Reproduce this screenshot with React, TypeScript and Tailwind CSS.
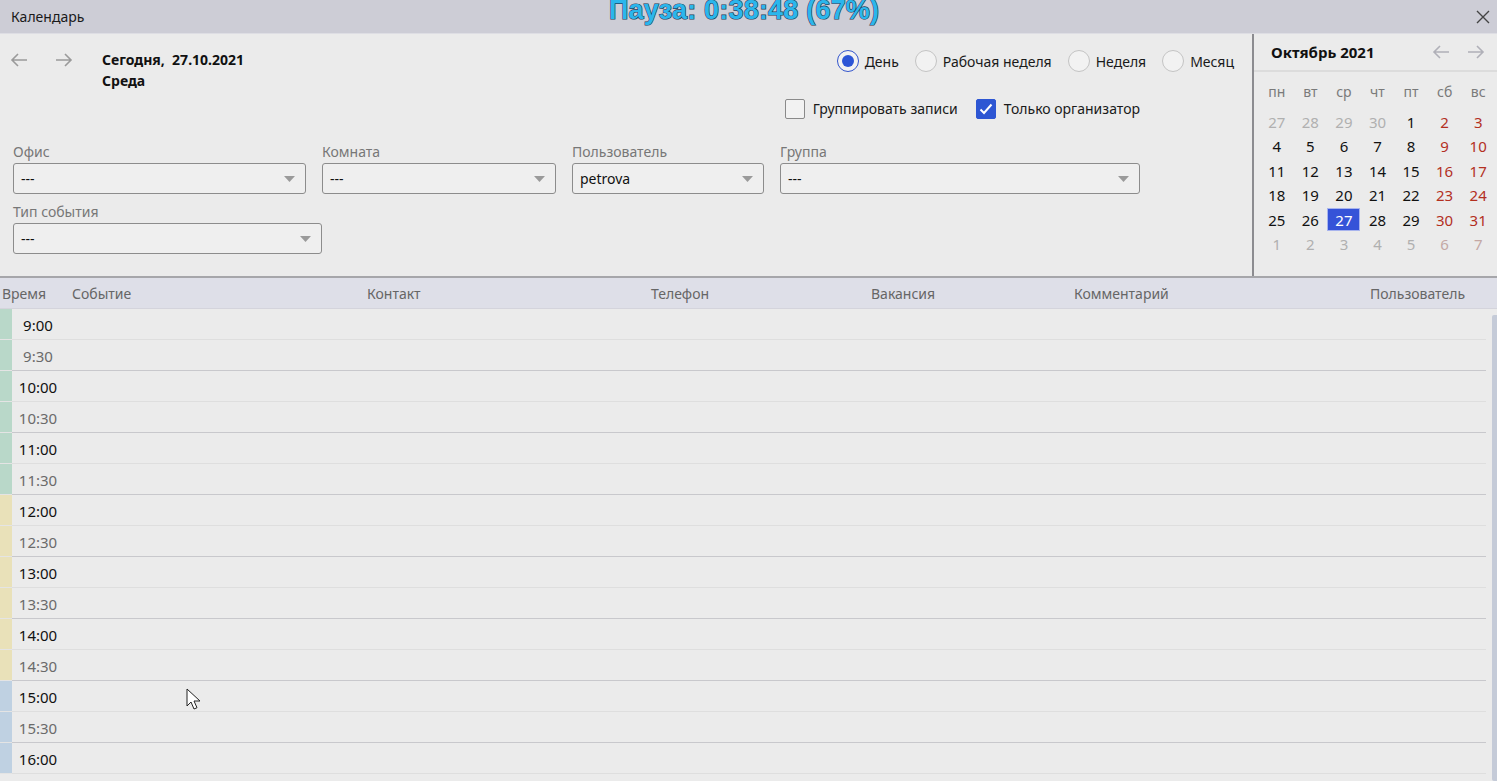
import React from 'react'

const font = { fontFamily: '"Noto Sans", "Open Sans", sans-serif' }

const Arrow = ({ dir, className }: { dir: 'l' | 'r'; className?: string }) => (
    <svg width="18" height="14" viewBox="0 0 18 14" className={className}>
        {dir === 'l' ? (
            <path d="M17 7H2M8 1L2 7l6 6" fill="none" stroke="currentColor" strokeWidth="1.6" />
        ) : (
            <path d="M1 7h15M10 1l6 6-6 6" fill="none" stroke="currentColor" strokeWidth="1.6" />
        )}
    </svg>
)

const Select = ({ value }: { value: string }) => (
    <div className="h-[31px] border border-[#8c8c8c] rounded-[3px] bg-[#efefef] flex items-center justify-between pl-[7px] pr-[10px]">
        <span className="text-[14px] text-[#111]">{value}</span>
        <svg width="11" height="6" viewBox="0 0 11 6">
            <path d="M0 0h11L5.5 6z" fill="#9a9a9a" />
        </svg>
    </div>
)

const Radio = ({ checked, label }: { checked?: boolean; label: string }) => (
    <div className="flex items-center gap-[6px]">
        <div className={`w-[22px] h-[22px] rounded-full border ${checked ? 'border-[#3355cc]' : 'border-[#c4c4c4]'} bg-[#f2f2f2] flex items-center justify-center`}>
            {checked && <div className="w-[12px] h-[12px] rounded-full bg-[#2c55d6]" />}
        </div>
        <span className="text-[14px] text-[#1a1a1a]">{label}</span>
    </div>
)

const Check = ({ checked, label }: { checked?: boolean; label: string }) => (
    <div className="flex items-center gap-[8px]">
        <div className={`w-[20px] h-[20px] rounded-[2px] flex items-center justify-center ${checked ? 'bg-[#2d56d3] border border-[#2d56d3]' : 'border border-[#8a8a8a] bg-[#f2f2f2]'}`}>
            {checked && (
                <svg width="14" height="12" viewBox="0 0 14 12">
                    <path d="M1.5 6.5l3.5 3.5 7.5-8.5" fill="none" stroke="#fff" strokeWidth="2" />
                </svg>
            )}
        </div>
        <span className="text-[14px] text-[#1a1a1a]">{label}</span>
    </div>
)

const weeks = [
    [27, 28, 29, 30, 1, 2, 3],
    [4, 5, 6, 7, 8, 9, 10],
    [11, 12, 13, 14, 15, 16, 17],
    [18, 19, 20, 21, 22, 23, 24],
    [25, 26, 27, 28, 29, 30, 31],
    [1, 2, 3, 4, 5, 6, 7],
]

const MiniCalendar = () => (
    <div className="w-[243px] flex flex-col">
        <div className="h-[38px] flex items-center justify-between pl-[17px] pr-[12px] border-b-2 border-[#dcdcdc]">
            <span className="text-[15px] font-bold text-[#111]">Октябрь 2021</span>
            <div className="flex gap-[17px] text-[#b0b0b8]">
                <Arrow dir="l" />
                <Arrow dir="r" />
            </div>
        </div>
        <div className="grid grid-cols-7 pl-[6px] pr-[2px] pt-[6px]">
            {['пн', 'вт', 'ср', 'чт', 'пт', 'сб', 'вс'].map(d => (
                <div key={d} className="h-[32px] pb-[6px] flex items-center justify-center text-[14px] text-[#7a7a7a]">{d}</div>
            ))}
            {weeks.map((w, wi) =>
                w.map((d, di) => {
                    const other = (wi === 0 && d > 20) || wi === 5
                    const weekend = di >= 5
                    const selected = wi === 4 && d === 27
                    let color = 'text-[#111]'
                    if (other) color = weekend ? 'text-[#c4a8a4]' : 'text-[#b0b0b0]'
                    else if (weekend) color = 'text-[#b3301f]'
                    return (
                        <div key={`${wi}-${di}`} className="h-[24.4px] flex items-center justify-center">
                            <div className={`w-[33px] h-[23px] flex items-center justify-center text-[15px] ${selected ? 'bg-[#3553d8] text-white border border-[#a8b4ee]' : color}`}>
                                {d}
                            </div>
                        </div>
                    )
                })
            )}
        </div>
    </div>
)

const times = ['9:00', '9:30', '10:00', '10:30', '11:00', '11:30', '12:00', '12:30', '13:00', '13:30', '14:00', '14:30', '15:00', '15:30', '16:00']

const stripe = (i: number) => (i < 6 ? 'bg-[#b9d8c9]' : i < 12 ? 'bg-[#e9e1b9]' : 'bg-[#bfd1e2]')

export default function App() {
    return (
        <div className="w-[1497px] h-[781px] overflow-hidden bg-[#ebebeb] relative flex flex-col" style={font}>
            <div className="h-[34px] bg-[#cdcdd6] border-b border-[#dedee4] flex items-center justify-between pl-[11px] pr-[6px] shrink-0">
                <span className="text-[14px] text-[#1a1a1a]">Календарь</span>
                <svg width="16" height="16" viewBox="0 0 16 16">
                    <path d="M2 2l12 12M14 2L2 14" stroke="#444" strokeWidth="1.4" />
                </svg>
            </div>
            {/* screen recorder overlay */}
            <div
                className="absolute left-[609px] top-[-6px] text-[27px] leading-[32px] font-bold text-[#2bb6ec] [-webkit-text-stroke:1.2px_#1d3b55] [paint-order:stroke_fill] tracking-[0.2px]"
                style={{ fontFamily: '"Liberation Sans", Arial, sans-serif' }}
            >
                Пауза: 0:38:48 (67%)
            </div>

            <div className="h-[244px] flex shrink-0 border-b-2 border-[#a6a6aa]">
                <div className="flex-1 flex flex-col pl-[13px] pr-[18px]">
                    <div className="flex justify-between pt-[15px]">
                        <div className="flex">
                            <div className="flex gap-[27px] text-[#9a9a9a] pt-[4px] -ml-[3px]">
                                <Arrow dir="l" />
                                <Arrow dir="r" />
                            </div>
                            <div className="ml-[29px] text-[14px] font-bold text-[#111] leading-[21px]">
                                <div>Сегодня,&nbsp; 27.10.2021</div>
                                <div>Среда</div>
                            </div>
                        </div>
                        <div className="flex flex-col items-end">
                            <div className="flex gap-[16px] pt-[1px]">
                                <Radio checked label="День" />
                                <Radio label="Рабочая неделя" />
                                <Radio label="Неделя" />
                                <Radio label="Месяц" />
                            </div>
                            <div className="flex gap-[18px] mt-[26px] mr-[94px]">
                                <Check label="Группировать записи" />
                                <Check checked label="Только организатор" />
                            </div>
                        </div>
                    </div>
                    <div className="flex gap-[16px] mt-[22px] text-[14px] text-[#777]">
                        <div className="flex flex-col w-[293px]">
                            <span className="leading-[22px]">Офис</span>
                            <Select value="---" />
                        </div>
                        <div className="flex flex-col w-[234px]">
                            <span className="leading-[22px]">Комната</span>
                            <Select value="---" />
                        </div>
                        <div className="flex flex-col w-[192px]">
                            <span className="leading-[22px]">Пользователь</span>
                            <Select value="petrova" />
                        </div>
                        <div className="flex flex-col w-[360px]">
                            <span className="leading-[22px]">Группа</span>
                            <Select value="---" />
                        </div>
                    </div>
                    <div className="flex flex-col w-[309px] mt-[7px] text-[14px] text-[#777]">
                        <span className="leading-[22px]">Тип события</span>
                        <Select value="---" />
                    </div>
                </div>
                <div className="w-[2px] bg-[#8c8c90]" />
                <MiniCalendar />
            </div>

            <div className="h-[31px] pt-[1px] bg-[#dedfe8] flex items-center text-[14px] text-[#666] shrink-0 border-b border-[#d4d4dc]">
                <span className="w-[72px] pl-[2px]">Время</span>
                <span className="w-[295px]">Событие</span>
                <span className="w-[284px]">Контакт</span>
                <span className="w-[220px]">Телефон</span>
                <span className="w-[203px]">Вакансия</span>
                <span className="w-[296px]">Комментарий</span>
                <span>Пользователь</span>
            </div>

            <div className="flex-1 flex overflow-hidden">
                <div className="flex-1 flex flex-col">
                    {times.map((t, i) => {
                        const hour = i % 2 === 0
                        return (
                            <div key={t} className="h-[31px] flex shrink-0">
                                <div className={`w-[12px] ${stripe(i)} border-b border-[#e4e4e4]`} />
                                <div className={`flex-1 flex items-center border-b ${hour ? 'border-[#dedede]' : 'border-[#c8c8cc]'} mr-[6px]`}>
                                    <span className={`w-[52px] pt-[2px] text-center text-[15px] ${hour ? 'text-[#111]' : 'text-[#6a6a6a]'}`}>{t}</span>
                                </div>
                            </div>
                        )
                    })}
                </div>
                <div className="w-[5px] bg-[#c5cbd8] mt-[6px] rounded-l-[2px]" />
            </div>

            <svg className="absolute left-[186px] top-[688px]" width="16" height="24" viewBox="0 0 16 24">
                <path d="M1 1v17l4-4 3 7 3-1.3-3-6.7h6z" fill="#fff" stroke="#222" strokeWidth="1" />
            </svg>
        </div>
    )
}
